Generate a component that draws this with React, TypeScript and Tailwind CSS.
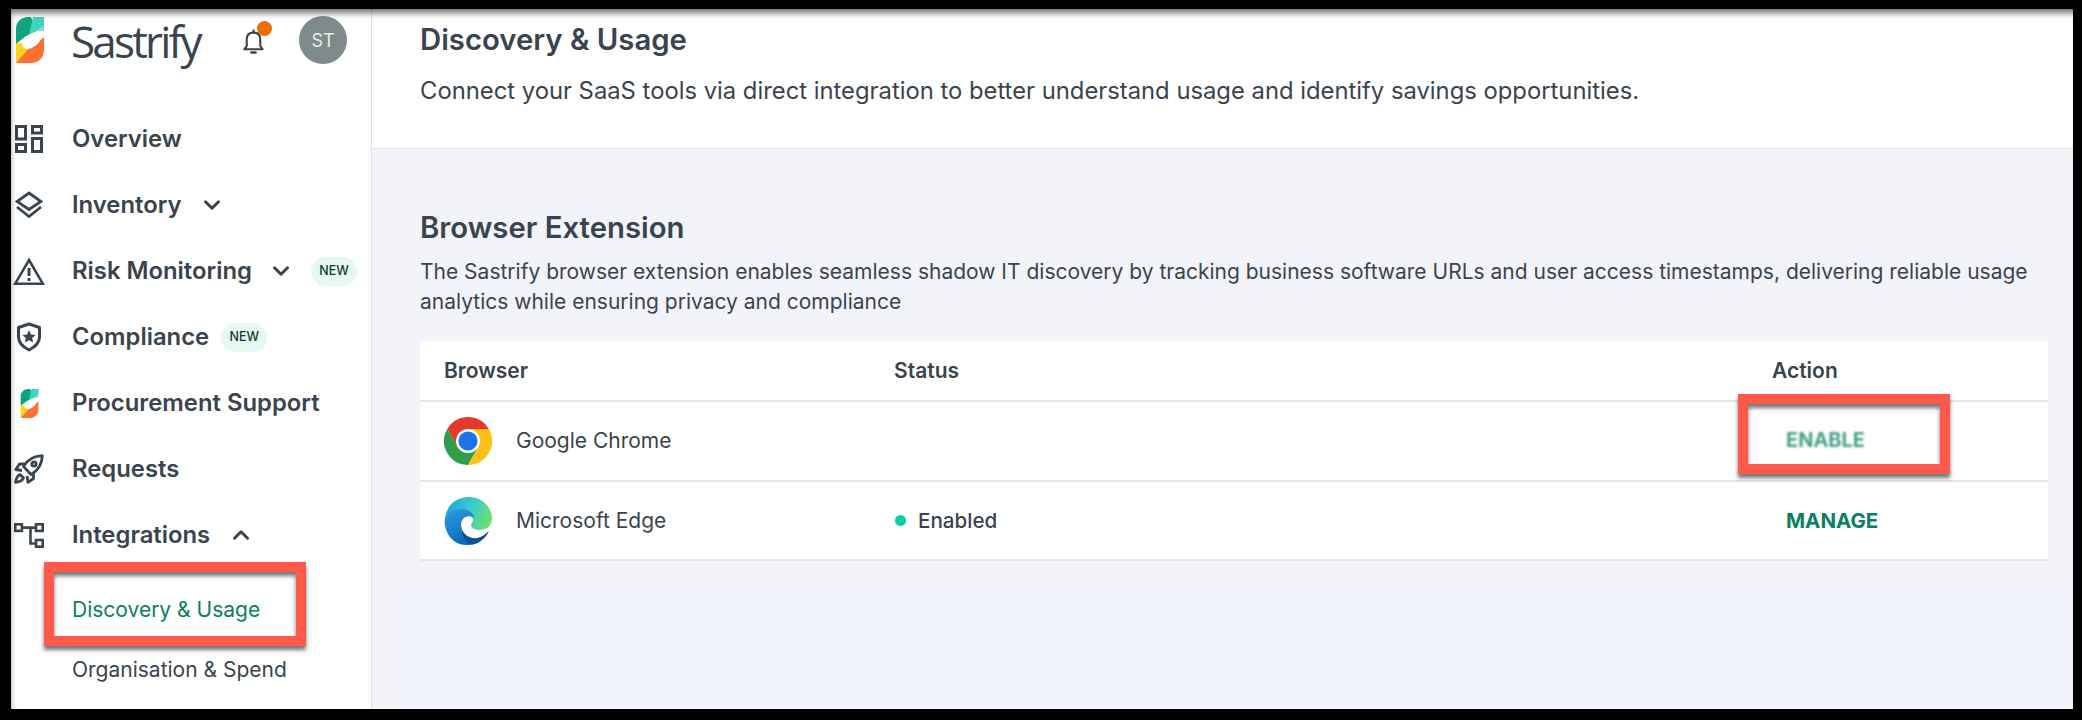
import { ChevronDown, ChevronUp } from "lucide-react";
import type { ReactNode } from "react";

function Logo({ className }: { className: string }) {
  return (
    <svg viewBox="0 0 28 46" className={className}>
      <path d="M28 0H12C5 0 0 5 0 12V27L10 19L20 14L15 0Z" fill="#0fa37f" />
      <path d="M28 0V14H20L14 16Z" fill="#7fe0cd" />
      <path d="M28 0V8L19 15L13 17L17 0Z" fill="#3fd4bd" />
      <path d="M0 26L7 26L13 31L0 46Z" fill="#fbd51c" />
      <path d="M0 46L13 31L28 20V33C28 41 22 46 15 46Z" fill="#ff7030" />
      <path d="M6 27C8 22 14 17 20 16C23 16 26 18 26 20C24 26 18 31 12 32C9 32 6 30 6 27Z" fill="#fff" />
    </svg>
  );
}

const ic = { fill: "none", stroke: "#3a444e" } as const;

function IconOverview() {
  return (
    <svg viewBox="0 0 28 28" className="w-[28px] h-[28px]" {...ic} strokeWidth={3}>
      <rect x="1.5" y="1.5" width="9" height="12.5" />
      <rect x="17.5" y="1.5" width="9" height="6.5" />
      <rect x="17.5" y="13.5" width="9" height="13" />
      <rect x="1.5" y="19.5" width="9" height="7" />
    </svg>
  );
}
function IconLayers() {
  return (
    <svg viewBox="0 0 28 28" className="w-[28px] h-[28px]" {...ic} strokeWidth={2.8}>
      <path d="M14 2L26 10.5L14 18.5L2 10.5Z" />
      <path d="M2 16L14 25.5L26 16" />
    </svg>
  );
}
function IconWarning() {
  return (
    <svg viewBox="0 0 32 28" className="w-[32px] h-[28px]" {...ic} strokeWidth={2.6}>
      <path d="M16 3L29.8 26.7H2.2Z" />
      <path d="M16 11V19" strokeWidth={3} />
      <path d="M16 21V24" strokeWidth={3} />
    </svg>
  );
}
function IconShield() {
  return (
    <svg viewBox="0 0 24 30" className="w-[24px] h-[30px]" {...ic} strokeWidth={3} strokeLinejoin="round">
      <path d="M12 2L22.5 5.5V15C22.5 22 17 25.5 12 28C7 25.5 1.5 22 1.5 15V5.5Z" />
      <path d="M12 8L14 12.6L18.6 13L15.1 16L16.2 20.6L12 18.2L7.8 20.6L8.9 16L5.4 13L10 12.6Z" fill="#3a444e" stroke="none" />
    </svg>
  );
}
function IconRocket() {
  return (
    <svg viewBox="0 0 30 30" className="w-[30px] h-[30px]" {...ic} strokeWidth={2.8} strokeLinejoin="round">
      <path d="M28.3 1.7C20 2 14 5 9.5 12.5L17 20.5C25 16 28 10 28.3 1.7Z" />
      <path d="M10.5 10H5.5L1.8 15.5L8 16.5" />
      <path d="M19.5 19.5V24.5L14 28.3L13 22" />
      <path d="M6 20.5C3.5 21.5 2 25 1.6 28.4C5 28 8.5 26.5 9.5 24Z" />
      <circle cx="20" cy="10" r="2.2" />
    </svg>
  );
}
function IconTree() {
  return (
    <svg viewBox="0 0 30 25" className="w-[30px] h-[25px]" {...ic} strokeWidth={2.6}>
      <rect x="1.3" y="1.3" width="6.6" height="6.6" />
      <rect x="22" y="1.3" width="6.7" height="6.6" />
      <rect x="22" y="17" width="6.7" height="6.7" />
      <path d="M8 4.6H22M16.5 4.6V20.5H22" />
    </svg>
  );
}
function IconBell() {
  return (
    <svg viewBox="0 0 20 24" className="w-[21px] h-[25px]" {...ic} strokeWidth={2}>
      <path d="M1.2 19.5H18.8L16.5 16.5V10C16.5 6 14 3.5 10 3.5C6 3.5 3.5 6 3.5 10V16.5Z" strokeLinejoin="round" />
      <path d="M10 .5V3.5" />
      <path d="M8 22.5H12" strokeWidth={2.4} strokeLinecap="round" />
    </svg>
  );
}

function Chrome() {
  const red = "M44.8 12A24 24 0 0 0 3.2 12L13.6 30L24 24V12Z";
  return (
    <svg viewBox="0 0 48 48" className="w-[48px] h-[48px]">
      <path d={red} fill="#e3392e" />
      <path d={red} fill="#2f9e48" transform="rotate(-120 24 24)" />
      <path d={red} fill="#fdc016" transform="rotate(120 24 24)" />
      <circle cx="24" cy="24" r="12" fill="#fff" />
      <circle cx="24" cy="24" r="9.6" fill="#1b73e8" />
    </svg>
  );
}
function Edge() {
  return (
    <svg viewBox="0 0 48 48" className="w-[48px] h-[48px]">
      <defs>
        <linearGradient id="edgeTop" x1="0" y1="0.3" x2="1" y2="0.6">
          <stop offset="0" stopColor="#1fa9d8" />
          <stop offset="0.5" stopColor="#38c9d0" />
          <stop offset="1" stopColor="#6fe06c" />
        </linearGradient>
        <linearGradient id="edgeBlue" x1="0.2" y1="0" x2="0.6" y2="1">
          <stop offset="0" stopColor="#2a9ae0" />
          <stop offset="1" stopColor="#0c68ba" />
        </linearGradient>
      </defs>
      <path d="M1 21C3 8 12 0 25 0C38 0 48 10 48 22C48 29 42 33 36 33C31 33 27 31 27 28C27 26 29 25 29 23C29 17 23 13 17 13C10 13 3 16 1 21Z" fill="url(#edgeTop)" />
      <path d="M.6 24C.6 17 8 12 17 12C24 12 30 16 30 21C24 17 18 20 17 27C16 35 23 44 30 47C27.5 47.7 25 48 22 48C9 48 .6 36 .6 24Z" fill="url(#edgeBlue)" />
      <path d="M17 27C17.5 38 26 42 33 41C38 40 42 37 45 33.5C42 42 33 48 27 47.5C21 46 17 37 17 27Z" fill="#0b4f96" />
    </svg>
  );
}

function New() {
  return (
    <span className="inline-flex items-center justify-center w-[46px] h-[29px] rounded-full bg-[#e5f8f4] text-[12.5px] font-medium text-[#153a2c]">
      NEW
    </span>
  );
}

function NavRow({ icon, label, after }: { icon: ReactNode; label: string; after?: ReactNode }) {
  return (
    <div className="flex items-center h-[66px]">
      <span className="w-[61px] flex items-center pl-[2px] shrink-0">
        <span className="w-[32px] flex justify-center shrink-0">{icon}</span>
      </span>
      <span className="text-[23.85px] leading-none font-semibold text-[#3a444e] whitespace-nowrap">{label}</span>
      {after}
    </div>
  );
}

export default function App() {
  return (
    <div className="relative w-[2082px] h-[720px] bg-black pt-[9px] pl-[11px] pr-[9px] pb-[11px] font-[Inter,sans-serif] overflow-hidden">
      <div className="relative flex h-full bg-[#f3f4f9]">
        <aside className="w-[361px] shrink-0 bg-white border-r border-[#dfe1e6]">
          <div className="relative h-[97px]">
            <Logo className="absolute left-[5px] top-[8px] w-[28px] h-[46px]" />
            <span className="absolute left-[60px] top-[6px] font-['Open_Sans',sans-serif] text-[44px] leading-[52px] text-[#3a444e] tracking-[-2.8px]">Sastrify</span>
            <span className="absolute left-[232px] top-[20px] flex">
              <IconBell />
              <span className="absolute left-[13.5px] -top-[8.5px] w-[15px] h-[15px] rounded-full bg-[#ee6c00]" />
            </span>
            <span className="absolute left-[288px] top-[7px] w-[48px] h-[48px] rounded-full bg-[#7f8a8a] flex items-center justify-center text-[18px] text-[#e8ecec]">ST</span>
          </div>
          <NavRow icon={<IconOverview />} label="Overview" />
          <NavRow icon={<IconLayers />} label="Inventory" after={<ChevronDown className="ml-[17px]" size={26} color="#3a444e" strokeWidth={2.8} />} />
          <NavRow
            icon={<IconWarning />}
            label="Risk Monitoring"
            after={
              <>
                <ChevronDown className="ml-[16px] mr-[17px]" size={26} color="#3a444e" strokeWidth={2.8} />
                <New />
              </>
            }
          />
          <NavRow icon={<IconShield />} label="Compliance" after={<span className="ml-[12px] flex"><New /></span>} />
          <NavRow icon={<Logo className="w-[19px] h-[29px]" />} label="Procurement Support" />
          <NavRow icon={<IconRocket />} label="Requests" />
          <NavRow icon={<IconTree />} label="Integrations" after={<ChevronUp className="ml-[18px]" size={26} color="#3a444e" strokeWidth={2.8} />} />
          <div className="mt-[12px] pl-[61px] text-[21px] text-[#3a444e]">
            <div className="h-[60px] flex items-center text-[#0a8060] font-normal">Discovery &amp; Usage</div>
            <div className="h-[60px] flex items-center">Organisation &amp; Spend</div>
          </div>
        </aside>
        <main className="flex-1 min-w-0 flex flex-col">
          <header className="h-[140px] bg-white border-b border-[#e3e5e9] pl-[48px] pt-[15px]">
            <h1 className="text-[29.3px] leading-[32px] font-semibold text-[#3a444e]">Discovery &amp; Usage</h1>
            <p className="mt-[19px] text-[23.8px] leading-[32px] text-[#3a444e]">Connect your SaaS tools via direct integration to better understand usage and identify savings opportunities.</p>
          </header>
          <section className="pl-[48px] pr-[25px] pt-[62px]">
            <h2 className="text-[29.3px] leading-[34px] font-semibold text-[#3a444e]">Browser Extension</h2>
            <p className="mt-[12px] text-[21px] leading-[30px] text-[#3a444e]">
              The Sastrify browser extension enables seamless shadow IT discovery by tracking business software URLs and user access timestamps, delivering reliable usage analytics while ensuring privacy and compliance
            </p>
            <div className="mt-[24px] bg-white text-[21px] text-[#3a444e]">
              <div className="grid grid-cols-[475px_877px_1fr] h-[61px] pt-[1px] items-center border-b-2 border-[#e3e5e9] font-semibold">
                <span className="pl-[24px]">Browser</span>
                <span className="-ml-[1px]">Status</span>
                <span>Action</span>
              </div>
              <div className="grid grid-cols-[475px_877px_1fr] h-[80px] items-center border-b-2 border-[#e3e5e9]">
                <span className="pl-[24px] flex items-center gap-[24px]"><Chrome />Google Chrome</span>
                <span />
                <span className="pl-[14px] pb-[2px] text-[20px] font-bold text-[#0a8060] opacity-75 blur-[1px]">ENABLE</span>
              </div>
              <div className="grid grid-cols-[475px_877px_1fr] h-[79px] items-center border-b-2 border-[#e3e5e9]">
                <span className="pl-[24px] flex items-center gap-[24px]"><Edge />Microsoft Edge</span>
                <span className="flex items-center gap-[12px] pt-[1px] font-medium text-[20.6px]"><i className="w-[11px] h-[11px] rounded-full bg-[#0ccf9d]" />Enabled</span>
                <span className="pl-[14px] pt-[1px] text-[20.5px] font-bold text-[#0a8060]">MANAGE</span>
              </div>
            </div>
          </section>
          <div className="flex-1 mt-[36px] ml-[33px] bg-[#f1f4fc]" />
        </main>
        <div className="absolute inset-0 pointer-events-none shadow-[inset_2px_7px_6px_-3px_rgba(0,0,0,0.55)]" />
      </div>
      <div className="absolute left-[44px] top-[562px] w-[262px] h-[84px] border-[10px] border-[#fd5a4c] shadow-[0_4px_4px_rgba(0,0,0,0.55),inset_0_4px_4px_rgba(0,0,0,0.55)]" />
      <div className="absolute left-[1738px] top-[394px] w-[212px] h-[80px] border-[10px] border-[#fd5a4c] shadow-[0_4px_4px_rgba(0,0,0,0.55),inset_0_4px_4px_rgba(0,0,0,0.55)]" />
    </div>
  );
}
